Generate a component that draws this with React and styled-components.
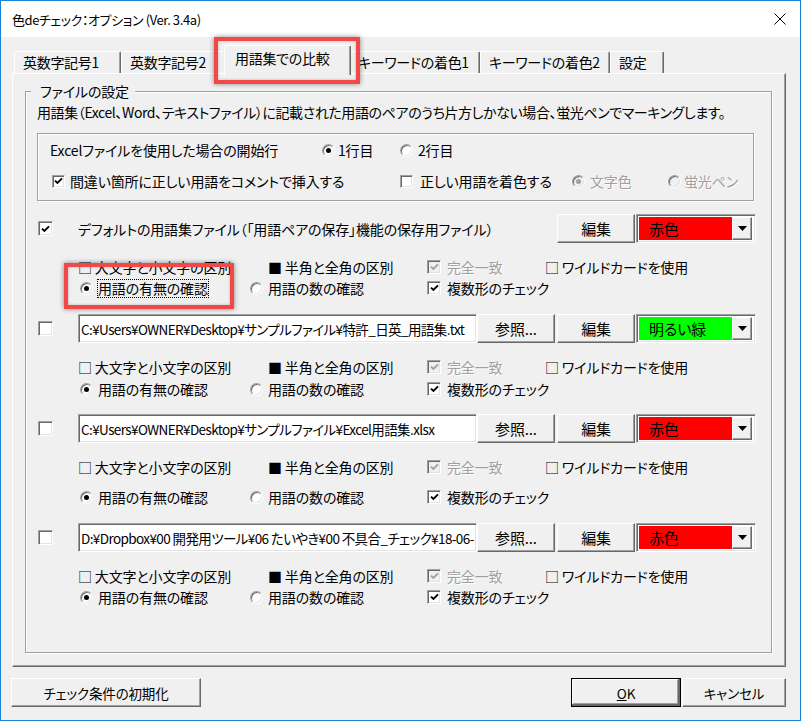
import React from 'react';
import styled, { createGlobalStyle } from 'styled-components';

const GlobalStyle = createGlobalStyle`
  html, body { margin: 0; padding: 0; background: #f0f0f0; }
  body {
    font-family: "Noto Sans CJK JP", "Noto Sans", sans-serif;
    font-size: 14px;
    letter-spacing: -0.15px;
    color: #000;
  }
`;

const Window = styled.div`
  position: relative;
  width: 801px;
  height: 721px;
  box-sizing: border-box;
  border: 1px solid #1883d7;
  background: #f0f0f0;
  display: flex;
  flex-direction: column;
  font-feature-settings: "palt";
`;

const TitleBar = styled.div`
  height: 36px;
  flex: none;
  background: #fff;
  display: flex;
  align-items: center;
  justify-content: space-between;
  padding: 0 14px 0 11px;
  font-size: 13px;
  letter-spacing: -0.4px;
`;

const Body = styled.div`
  padding: 6px 0 0 11px;
  display: flex;
  flex-direction: column;
`;

const TabStrip = styled.div`
  display: flex;
  align-items: flex-end;
  height: 30px;
  padding-left: 2px;
`;

const Tab = styled.div`
  box-sizing: border-box;
  flex: none;
  position: relative;
  z-index: ${p => (p.$active ? 2 : 1)};
  width: ${p => p.$w + (p.$active ? 4 : 0)}px;
  height: ${p => (p.$active ? 30 : 22)}px;
  margin: 0 ${p => (p.$active ? -2 : 0)}px ${p => (p.$active ? -2 : 0)}px;
  background: #f0f0f0;
  border-top: 1px solid #fff;
  border-left: 1px solid #fff;
  border-right: 1px solid #696969;
  box-shadow: inset -1px 0 0 #a0a0a0;
  border-radius: 2px 2px 0 0;
  padding: ${p => (p.$active ? '3px 0 0 10px' : '1px 0 0 8px')};
  font-size: 14px;
  letter-spacing: -0.3px;
  line-height: 18px;
  white-space: nowrap;
  overflow: hidden;
`;

const Panel = styled.div`
  box-sizing: border-box;
  width: 774px;
  height: 594px;
  border-top: 1px solid #fff;
  border-left: 1px solid #fff;
  border-right: 1px solid #696969;
  border-bottom: 1px solid #696969;
  box-shadow: inset -1px -1px 0 #a0a0a0;
  padding: 17px 0 0 12px;
`;

const Group = styled.div`
  box-sizing: border-box;
  width: 747px;
  height: 562px;
  border: 1px solid #a0a0a0;
  box-shadow: 1px 1px 0 #fff, inset 1px 1px 0 #fff;
  display: flex;
  flex-direction: column;
`;

const Legend = styled.div`
  align-self: flex-start;
  margin: -9px 0 0 5px;
  padding: 0 6px 0 9px;
  background: #f0f0f0;
  line-height: 16px;
`;

const Description = styled.div`
  margin: 5px 0 0 11px;
  line-height: 16px;
  white-space: nowrap;
  letter-spacing: -0.4px;
`;

const InnerBox = styled.div`
  box-sizing: border-box;
  width: 717px;
  height: 68px;
  margin: 13px 0 0 11px;
  border: 1px solid #a0a0a0;
  box-shadow: 1px 1px 0 #fff, inset 1px 1px 0 #fff;
  padding: 7px 0 0 12px;
  display: flex;
  flex-direction: column;
  gap: 13px;
`;

const Line = styled.div`
  display: flex;
  align-items: center;
  height: 18px;
  margin-left: ${p => p.$ml || 0}px;
  margin-top: ${p => p.$mt || 0}px;
`;

const Item = styled.div`
  display: flex;
  align-items: center;
  flex: none;
  gap: ${p => (p.$gap ?? 5)}px;
  width: ${p => (p.$w ? `${p.$w}px` : 'auto')};
  margin-left: ${p => p.$ml || 0}px;
`;

const Label = styled.span`
  white-space: nowrap;
  line-height: 17px;
  color: ${p => (p.$disabled ? '#a0a0a0' : '#000')};
  ${p => p.$disabled && 'text-shadow: 1px 1px 0 #fff;'}
  ${p => p.$focus && 'outline: 1px dotted #000; outline-offset: 0;'}
`;

const CheckBoxFrame = styled.span`
  box-sizing: border-box;
  flex: none;
  width: ${p => p.$size}px;
  height: ${p => p.$size}px;
  border: 1px solid;
  border-color: #a0a0a0 #fff #fff #a0a0a0;
  box-shadow: inset 1px 1px 0 #696969, inset -1px -1px 0 #e3e3e3;
  background: ${p => (p.$disabled ? '#f0f0f0' : '#fff')};
  color: ${p => (p.$disabled ? '#a0a0a0' : '#000')};
  display: flex;
  align-items: center;
  justify-content: center;
`;

const RadioFrame = styled.span`
  box-sizing: border-box;
  flex: none;
  width: 13px;
  height: 13px;
  border-radius: 50%;
  border: 1px solid;
  border-color: #a0a0a0 #fff #fff #a0a0a0;
  box-shadow: inset 1px 1px 0 #696969, inset -1px -1px 0 #e3e3e3;
  background: ${p => (p.$disabled ? '#f0f0f0' : '#fff')};
  display: flex;
  align-items: center;
  justify-content: center;

  &::after {
    content: '';
    display: ${p => (p.$checked ? 'block' : 'none')};
    width: 5px;
    height: 5px;
    border-radius: 50%;
    background: ${p => (p.$disabled ? '#a0a0a0' : '#000')};
  }
`;

const Rows = styled.div`
  width: 718px;
  margin: 13px 0 0 12px;
  display: flex;
  flex-direction: column;
`;

const Row = styled.div`
  display: flex;
  flex-direction: column;
  margin-bottom: ${p => p.$after}px;
`;

const TopLine = styled.div`
  display: flex;
  align-items: center;
  height: 29px;
`;

const RowText = styled.div`
  flex: 1;
  margin-left: 25px;
  white-space: nowrap;
`;

const TextBox = styled.div`
  box-sizing: border-box;
  width: 400px;
  height: 29px;
  margin-left: 25px;
  border: 1px solid;
  border-color: #a0a0a0 #fff #fff #a0a0a0;
  box-shadow: inset 1px 1px 0 #696969, inset -1px -1px 0 #e3e3e3;
  background: #fff;
  padding: 0 0 0 2px;
  display: flex;
  align-items: center;
  white-space: nowrap;
  overflow: hidden;
  font-size: 13.5px;
  letter-spacing: -0.6px;
`;

const Button = styled.div`
  box-sizing: border-box;
  flex: none;
  width: ${p => p.$w}px;
  height: 29px;
  margin-left: ${p => p.$ml || 0}px;
  display: flex;
  align-items: center;
  justify-content: center;
  background: #f0f0f0;
  border-top: 1px solid #fff;
  border-left: 1px solid #fff;
  border-right: 1px solid #696969;
  border-bottom: 1px solid #696969;
  box-shadow: inset -1px -1px 0 #a0a0a0;
  font-size: ${p => p.$fs || 15}px;
  white-space: nowrap;
  ${p => p.$default && `
    outline: 1px solid #000;
    outline-offset: -1px;
    box-shadow: inset -2px -2px 0 #696969, inset 1px 1px 0 #fff, inset -3px -3px 0 #a0a0a0;
  `}
`;

const Combo = styled.div`
  box-sizing: border-box;
  flex: none;
  width: 120px;
  height: 29px;
  margin-left: 1px;
  border: 1px solid;
  border-color: #a0a0a0 #fff #fff #a0a0a0;
  box-shadow: inset 1px 1px 0 #696969, inset -1px -1px 0 #e3e3e3;
  background: #fff;
  padding: 2px 3px 2px 2px;
  display: flex;
`;

const ComboField = styled.div`
  flex: 1;
  background: ${p => p.$color};
  padding-left: 10px;
  display: flex;
  align-items: center;
  font-size: 15px;
`;

const ComboArrow = styled.div`
  box-sizing: border-box;
  width: 20px;
  background: #f0f0f0;
  border-top: 1px solid #fff;
  border-left: 1px solid #fff;
  border-right: 1px solid #696969;
  border-bottom: 1px solid #696969;
  box-shadow: inset -1px -1px 0 #a0a0a0;
  display: flex;
  align-items: center;
  justify-content: center;
`;

const Options = styled.div`
  display: flex;
  flex-direction: column;
  margin: 15px 0 0 40px;
`;

const Footer = styled.div`
  width: 774px;
  margin-top: 11px;
  display: flex;
  justify-content: space-between;
`;

const FooterRight = styled.div`
  display: flex;
  gap: 1px;
`;

const Highlight = styled.div`
  position: absolute;
  box-sizing: border-box;
  left: ${p => p.$x}px;
  top: ${p => p.$y}px;
  width: ${p => p.$w}px;
  height: ${p => p.$h}px;
  border: 4px solid #f24848;
  box-shadow: 0 0 5px rgba(0, 0, 0, 0.45), inset 0 0 3px rgba(0, 0, 0, 0.25);
  pointer-events: none;
  z-index: 5;
`;

function CheckBox({ checked, disabled, size = 14 }) {
  return (
    <CheckBoxFrame $size={size} $disabled={disabled}>
      {checked && (
        <svg width="9" height="8" viewBox="0 0 9 8">
          <path d="M1 3.6 L3.4 6 L8 1.3" fill="none" stroke="currentColor" strokeWidth="1.9" />
        </svg>
      )}
    </CheckBoxFrame>
  );
}

function Radio({ checked, disabled }) {
  return <RadioFrame $checked={checked} $disabled={disabled} />;
}

function CloseIcon() {
  return (
    <svg width="12" height="12" viewBox="0 0 12 12">
      <path d="M0.5 0.5 L11.5 11.5 M11.5 0.5 L0.5 11.5" stroke="#000" strokeWidth="1" />
    </svg>
  );
}

function DropArrow() {
  return (
    <svg width="9" height="5" viewBox="0 0 9 5">
      <path d="M0 0 H9 L4.5 5 Z" fill="#000" />
    </svg>
  );
}

const tabs = [
  { label: '英数字記号1', w: 107 },
  { label: '英数字記号2', w: 105 },
  { label: '用語集での比較', w: 123, active: true },
  { label: 'キーワードの着色1', w: 131 },
  { label: 'キーワードの着色2', w: 130 },
  { label: '設定', w: 54 },
];

const rows = [
  {
    checked: true,
    text: 'デフォルトの用語集ファイル（「用語ペアの保存」機能の保存用ファイル）',
    color: '#ff0000',
    colorName: '赤色',
    gap: 3,
    after: 17,
    focus: true,
  },
  {
    path: 'C:¥Users¥OWNER¥Desktop¥サンプルファイル¥特許_日英_用語集.txt',
    color: '#00ff00',
    colorName: '明るい緑',
    gap: 4,
    after: 16,
  },
  {
    path: 'C:¥Users¥OWNER¥Desktop¥サンプルファイル¥Excel用語集.xlsx',
    color: '#ff0000',
    colorName: '赤色',
    gap: 12,
    after: 17,
  },
  {
    path: 'D:¥Dropbox¥00 開発用ツール¥06 たいやき¥00 不具合_チェック¥18-06-',
    color: '#ff0000',
    colorName: '赤色',
    gap: 3,
    after: 0,
  },
];

function FileRow({ row }) {
  return (
    <Row $after={row.after}>
      <TopLine>
        <CheckBox checked={row.checked} size={15} />
        {row.text ? (
          <RowText>{row.text}</RowText>
        ) : (
          <>
            <TextBox>{row.path}</TextBox>
            <Button $w={78}>参照...</Button>
          </>
        )}
        <Button $w={78} $ml={2}>編集</Button>
        <Combo>
          <ComboField $color={row.color}>{row.colorName}</ComboField>
          <ComboArrow><DropArrow /></ComboArrow>
        </Combo>
      </TopLine>
      <Options>
        <Line>
          <Item $w={190}><Label>□ 大文字と小文字の区別</Label></Item>
          <Item $w={159}><Label>■ 半角と全角の区別</Label></Item>
          <Item $w={118} $gap={6}>
            <CheckBox checked disabled />
            <Label $disabled>完全一致</Label>
          </Item>
          <Item><Label>□ ワイルドカードを使用</Label></Item>
        </Line>
        <Line $mt={row.gap}>
          <Item $w={170} $ml={2}>
            <Radio checked />
            <Label $focus={row.focus}>用語の有無の確認</Label>
          </Item>
          <Item $w={177}>
            <Radio />
            <Label>用語の数の確認</Label>
          </Item>
          <Item $gap={6}>
            <CheckBox checked />
            <Label>複数形のチェック</Label>
          </Item>
        </Line>
      </Options>
    </Row>
  );
}

export default function App() {
  return (
    <>
      <GlobalStyle />
      <Window>
        <TitleBar>
          <span>色deチェック：オプション (Ver. 3.4a)</span>
          <CloseIcon />
        </TitleBar>
        <Body>
          <TabStrip>
            {tabs.map(t => (
              <Tab key={t.label} $w={t.w} $active={t.active}>{t.label}</Tab>
            ))}
          </TabStrip>
          <Panel>
            <Group>
              <Legend>ファイルの設定</Legend>
              <Description>
                用語集（Excel、Word、テキストファイル）に記載された用語のペアのうち片方しかない場合、蛍光ペンでマーキングします。
              </Description>
              <InnerBox>
                <Line>
                  <Item $w={272}><Label>Excelファイルを使用した場合の開始行</Label></Item>
                  <Item $w={78} $gap={3}>
                    <Radio checked />
                    <Label>1行目</Label>
                  </Item>
                  <Item $gap={5}>
                    <Radio />
                    <Label>2行目</Label>
                  </Item>
                </Line>
                <Line $ml={2}>
                  <Item $w={348} $gap={5}>
                    <CheckBox checked size={13} />
                    <Label>間違い箇所に正しい用語をコメントで挿入する</Label>
                  </Item>
                  <Item $w={172} $gap={7}>
                    <CheckBox size={13} />
                    <Label>正しい用語を着色する</Label>
                  </Item>
                  <Item $w={96} $gap={5}>
                    <Radio checked disabled />
                    <Label $disabled>文字色</Label>
                  </Item>
                  <Item $gap={3}>
                    <Radio disabled />
                    <Label $disabled>蛍光ペン</Label>
                  </Item>
                </Line>
              </InnerBox>
              <Rows>
                {rows.map((r, i) => (
                  <FileRow key={i} row={r} />
                ))}
              </Rows>
            </Group>
          </Panel>
          <Footer>
            <Button $w={190} $fs={13.5} style={{ marginLeft: -1 }}>チェック条件の初期化</Button>
            <FooterRight>
              <Button $w={110} $fs={13.5} $default>
                <span><u>O</u>K</span>
              </Button>
              <Button $w={104} $fs={13.5}>キャンセル</Button>
            </FooterRight>
          </Footer>
        </Body>
        <Highlight $x={213} $y={36} $w={146} $h={47} />
        <Highlight $x={63} $y={262} $w={170} $h={46} />
      </Window>
    </>
  );
}
